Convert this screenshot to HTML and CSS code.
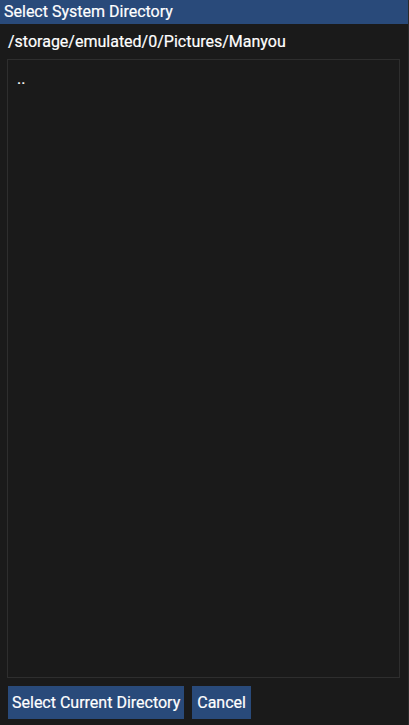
FILE: index.html
```html
<!DOCTYPE html>
<html>
<head>
<meta charset="utf-8">
<link rel="stylesheet" href="styles.css">
</head>
<body>
<div class="window">
  <div class="titlebar">Select System Directory</div>
  <div class="content">
    <div class="path">/storage/emulated/0/Pictures/Manyou</div>
    <div class="listbox">
      <div class="item">..</div>
    </div>
    <div class="buttons">
      <button class="btn">Select Current Directory</button>
      <button class="btn">Cancel</button>
    </div>
  </div>
</div>
</body>
</html>
```

FILE: styles.css
```css
html, body {
  margin: 0;
  padding: 0;
  background: #1a1a1a;
}
body {
  width: 409px;
  height: 725px;
  overflow: hidden;
  font-family: Roboto, "Noto Sans", sans-serif;
  color: #ffffff;
  -webkit-text-stroke: 0.2px #ffffff;
}
.window {
  width: 409px;
  height: 725px;
  box-sizing: border-box;
  border-right: 1px solid #2a2a2a;
  display: flex;
  flex-direction: column;
  background: #1a1a1a;
}
.titlebar {
  height: 24px;
  background: #294a7a;
  font-size: 16px;
  line-height: 24px;
  padding-left: 4px;
}
.content {
  flex: 1;
  display: flex;
  flex-direction: column;
  padding: 6px 8px 6px 8px;
}
.path {
  font-size: 16px;
  line-height: 24px;
  height: 29px;
}
.listbox {
  width: 393px;
  height: 619px;
  box-sizing: border-box;
  margin-left: -1px;
  border: 1px solid #2e2e2e;
  padding: 11px 9px;
}
.item {
  font-size: 16px;
  line-height: 16px;
}
.buttons {
  display: flex;
  gap: 8px;
  margin-top: 8px;
}
.btn {
  font-family: Roboto, "Noto Sans", sans-serif;
  font-size: 16px;
  color: #ffffff;
  -webkit-text-stroke: 0.2px #ffffff;
  background: #294a7a;
  border: none;
  height: 33px;
  padding: 0 4px 0 4px;
  margin: 0;
}
.btn + .btn {
  padding: 0 5px 0 5px;
}
```
